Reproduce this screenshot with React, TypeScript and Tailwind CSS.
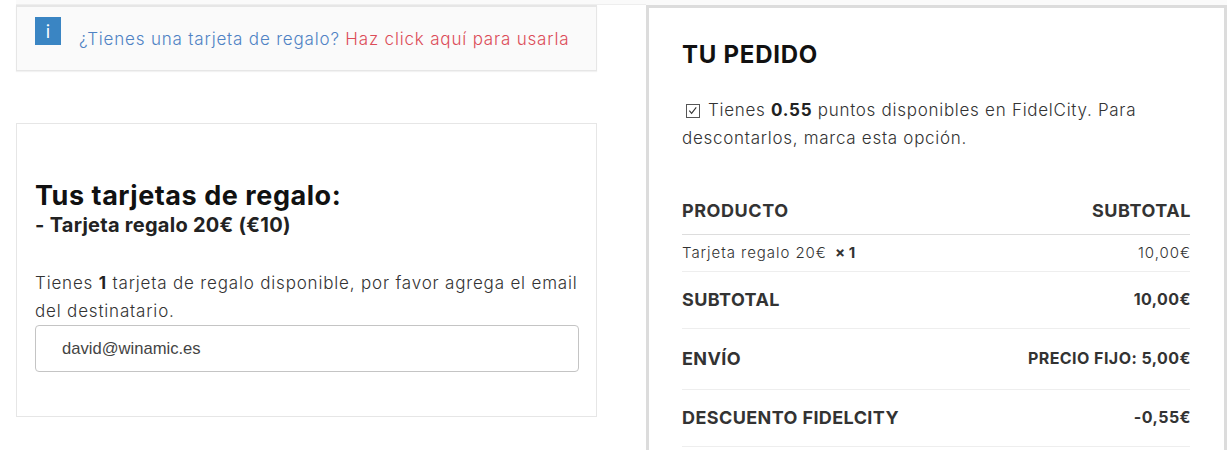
const rows = [
  { label: "SUBTOTAL", value: "10,00€", height: "h-[57px]" },
  { label: "ENVÍO", value: "PRECIO FIJO: 5,00€", height: "h-[61px]" },
  { label: "DESCUENTO FIDELCITY", value: "-0,55€", height: "h-[57px]" },
];

export default function App() {
  return (
    <div className="w-[1228px] h-[450px] overflow-hidden bg-white font-['Inter',sans-serif] text-[#333]">
      <div className="flex">
        {/* columna izquierda */}
        <div className="w-[646px] shrink-0 pl-4">
          <div className="h-[5px] border-b border-[#eeeeee] bg-[#fafafa]" />
          <div className="w-[581px] h-[66px] flex items-start border border-t-2 border-[#e6e6e6] bg-[#fafafa] pl-[18px] shadow-[0_1px_1px_rgba(0,0,0,0.05)]">
            <div className="w-[26px] h-7 mt-[10px] flex items-center justify-center bg-[#3a85c3] text-white text-[18px]">i</div>
            <p className="ml-[18px] mt-[20px] text-[17px] leading-6 font-light tracking-[0.82px] text-[#4f82c4]">
              ¿Tienes una tarjeta de regalo? <span className="text-[#dc4c58]">Haz click aquí para usarla</span>
            </p>
          </div>
          <div className="w-[581px] h-[294px] mt-[52px] border border-[#e6e6e6] pl-[18px] pr-[17px] pt-[57px]">
            <h2 className="text-[27px] leading-[30px] font-bold tracking-[0.55px] text-[#111]">Tus tarjetas de regalo:</h2>
            <h3 className="text-[20px] leading-[28px] font-bold tracking-[0.27px] text-[#222]">- Tarjeta regalo 20€ (€10)</h3>
            <p className="mt-[30px] text-[17px] leading-7 font-light tracking-[0.82px] text-[#333]">
              Tienes <strong className="font-bold text-[#222]">1</strong> tarjeta de regalo disponible, por favor agrega el email del destinatario.
            </p>
            <div className="h-[47px] pt-[2px] flex items-center rounded border border-[#c4c4c4] pl-[26px] font-['Liberation_Sans',sans-serif] text-[16.6px] text-[#444]">
              david@winamic.es
            </div>
          </div>
        </div>
        {/* tu pedido */}
        <div className="w-[581px] shrink-0">
          <div className="h-[5px] bg-[#fafafa]" />
          <div className="h-[445px] border-t-[3px] border-x-[3px] border-[#dcdcdc] pl-[33px] pr-[34px] pt-[31px]">
            <h2 className="text-[24px] leading-8 font-bold tracking-[0.75px] text-[#111]">TU PEDIDO</h2>
            <p className="mt-[25px] text-[17px] leading-7 font-light tracking-[0.72px] text-[#333]">
              <span className="inline-block w-[14px] h-[14px] ml-1 mr-2 align-[-2px] border border-[#555] relative">
                <svg viewBox="0 0 13 13" className="absolute inset-0 w-3 h-3" fill="none" stroke="#333" strokeWidth="1.2"><path d="M2.5 6l2.5 3 5-6.5" /></svg>
              </span>
              Tienes <strong className="font-bold text-[#222]">0.55</strong> puntos disponibles en FidelCity. Para descontarlos, marca esta opción.
            </p>
            <div className="mt-[36px] h-[47px] pb-[2px] flex items-center justify-between border-b border-[#ddd] text-[18px] font-bold tracking-[0.55px]">
              <span>PRODUCTO</span>
              <span className="-mr-px">SUBTOTAL</span>
            </div>
            <div className="h-[37px] flex items-center justify-between border-b border-[#eee] text-[15px] font-light tracking-[0.95px] text-[#333]">
              <span>Tarjeta regalo 20€ <strong className="ml-[3px] font-bold tracking-normal text-[#333]">× 1</strong></span>
              <span className="-mr-px">10,00€</span>
            </div>
            {rows.map((row) => (
              <div key={row.label} className={`${row.height} pb-[2px] flex items-center justify-between border-b border-[#eee] font-bold`}>
                <span className="text-[18px] tracking-[0.4px]">{row.label}</span>
                <span className="-mr-px text-[16px] tracking-[0.45px]">{row.value}</span>
              </div>
            ))}
          </div>
        </div>
      </div>
    </div>
  );
}
